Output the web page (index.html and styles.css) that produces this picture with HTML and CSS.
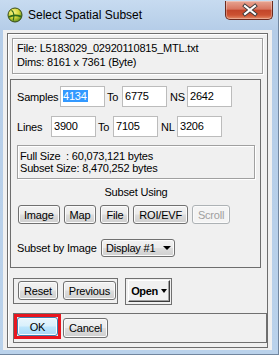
FILE: index.html
```html
<!DOCTYPE html>
<html lang="en">
<head>
  <meta charset="UTF-8">
  <title>Select Spatial Subset</title>
  <link rel="stylesheet" href="styles.css">
</head>
<body>

  <div class="window">
    <!-- title bar -->
    <div class="titlebar">
      <svg class="app-icon" viewBox="0 0 16 16">
        <defs>
          <radialGradient id="globe" cx="38%" cy="32%" r="70%">
            <stop offset="0" stop-color="#fbf48a"/>
            <stop offset="0.55" stop-color="#d2d53a"/>
            <stop offset="1" stop-color="#5f8f1e"/>
          </radialGradient>
        </defs>
        <circle cx="8" cy="8" r="7" fill="url(#globe)" stroke="#364a18" stroke-width="1"/>
        <path d="M1.8 10 C5 8.2 10 8 14.2 9.6" stroke="#2e6a1c" stroke-width="1.7" fill="none"/>
        <path d="M4.5 3.2 C7 5 7.4 9 6.2 13.6" stroke="#2e6a1c" stroke-width="1.1" fill="none"/>
      </svg>
      <span class="title">Select Spatial Subset</span>
      <div class="close-btn">
        <svg viewBox="0 0 48 19" width="48" height="19">
          <path d="M20 6 L30 14 M30 6 L20 14" stroke="#3b3b3b" stroke-width="4" stroke-linecap="square"/>
          <path d="M20 6 L30 14 M30 6 L20 14" stroke="#ffffff" stroke-width="2.1" stroke-linecap="square"/>
        </svg>
      </div>
    </div>

    <div class="client">
      <div class="outer">

        <div class="file-info">
          <div>File: L5183029_02920110815_MTL.txt</div>
          <div>Dims: 8161 x 7361 (Byte)</div>
        </div>

        <div class="subset-panel">
          <div class="field-row">
            <span class="lbl lbl-samples">Samples</span>
            <div class="field"><span class="sel">4134</span></div>
            <span class="lbl lbl-to">To</span>
            <div class="field">6775</div>
            <span class="lbl lbl-ns">NS</span>
            <div class="field">2642</div>
          </div>
          <div class="field-row row-lines">
            <span class="lbl lbl-lines">Lines</span>
            <div class="field">3900</div>
            <span class="lbl lbl-to">To</span>
            <div class="field">7105</div>
            <span class="lbl lbl-nl">NL</span>
            <div class="field">3206</div>
          </div>

          <div class="size-info">
            <div>Full Size&nbsp; : 60,073,121 bytes</div>
            <div>Subset Size: 8,470,252 bytes</div>
          </div>

          <div class="using-title">Subset Using</div>
          <div class="btn-row">
            <button class="btn">Image</button>
            <button class="btn">Map</button>
            <button class="btn">File</button>
            <button class="btn">ROI/EVF</button>
            <button class="btn" disabled>Scroll</button>
          </div>

          <div class="by-image">
            <span class="by-image-label">Subset by Image</span>
            <div class="dropdown">
              <span>Display #1</span>
              <span class="arrow"></span>
            </div>
          </div>
        </div>

        <div class="bottom-row">
          <div class="group group-reset">
            <button class="btn">Reset</button>
            <button class="btn">Previous</button>
          </div>
          <div class="group group-open">
            <div class="open-btn">Open <span class="arrow"></span></div>
          </div>
        </div>

        <div class="group group-ok">
          <div class="focus-mark"><button class="btn btn-ok">OK</button></div>
          <button class="btn btn-cancel">Cancel</button>
        </div>

      </div>
    </div>
  </div>

</body>
</html>
```

FILE: styles.css
```css
body {
  margin: 0;
  font-family: 'Liberation Sans', Arial, sans-serif;
  font-size: 11px;
  letter-spacing: -0.2px;
  color: #000;
  background: #b9d1ea;
}
.window {
  width: 279px;
  height: 355px;
  box-sizing: border-box;
  display: flex;
  flex-direction: column;
  background: linear-gradient(180deg, #c7dbf0 0, #b5cde8 30px, #bad2eb 100%);
  border-right: 1px solid #71869f;
  border-bottom: 1px solid #71869f;
}
.titlebar {
  height: 30px;
  flex-shrink: 0;
  display: flex;
  align-items: flex-start;
}
.app-icon {
  width: 16px;
  height: 16px;
  margin: 7px 0 0 7px;
}
.title {
  margin: 8px 0 0 5px;
  font-size: 12px;
  line-height: 15px;
  letter-spacing: 0;
}
.close-btn {
  margin: 1px 5px 0 auto;
  width: 48px;
  height: 19px;
  box-sizing: border-box;
  border: 1px solid #6b2a1e;
  border-top: none;
  border-radius: 0 0 5px 5px;
  background: linear-gradient(180deg, #e7a593 0%, #d87560 45%, #c3462a 52%, #cc5232 78%, #e48a66 100%);
  box-shadow: inset 0 0 0 1px rgba(255, 255, 255, 0.3);
  overflow: hidden;
}
.close-btn svg {
  display: block;
  margin: -1px 0 0 -1px;
}
.client {
  flex: 1;
  margin: 0 6px 4px 3px;
  padding: 3px 4px 2px 4px;
  background: #f0f0f0;
  display: flex;
  flex-direction: column;
}
.outer {
  flex: 1;
  border: 1px solid #6d6d6d;
  box-shadow: inset 1px 1px 0 #fff;
}
.file-info {
  margin: 4px 4px 0 4px;
  height: 36px;
  box-sizing: border-box;
  border: 1px solid #a0a0a0;
  box-shadow: inset 1px 1px 0 #fff, 1px 1px 0 #fff;
  padding: 2px 4px;
  line-height: 14px;
}
.subset-panel {
  margin: 5px 6px 0 2px;
  border: 1px solid #6d6d6d;
  padding: 0 5px 10px 6px;
}
.field-row {
  display: flex;
  align-items: center;
  margin-top: 6px;
  height: 21px;
}
.row-lines {
  margin-top: 9px;
}
.lbl {
  flex: none;
  padding-left: 2px;
  box-sizing: border-box;
}
.lbl-samples {
  width: 43px;
  padding-left: 0;
}
.lbl-lines {
  width: 34px;
  padding-left: 0;
}
.lbl-to {
  width: 17px;
}
.lbl-ns {
  width: 20px;
  padding-left: 3px;
}
.lbl-nl {
  width: 19px;
  padding-left: 3px;
}
.field {
  flex: none;
  width: 45px;
  height: 21px;
  box-sizing: border-box;
  border: 1px solid #bcbcbc;
  background: #fff;
  padding: 0 2px;
  line-height: 19px;
}
.sel {
  display: inline-block;
  background: #3399ff;
  color: #fff;
  line-height: 12px;
  padding: 0 1px 0 0;
}
.size-info {
  margin-top: 8px;
  border: 1px solid #a0a0a0;
  box-shadow: inset 1px 1px 0 #fff, 1px 1px 0 #fff;
  padding: 4px 2px;
  line-height: 12px;
}
.using-title {
  margin-top: 7px;
  line-height: 12px;
  text-align: center;
}
.btn-row {
  display: flex;
  gap: 4px;
  margin-top: 7px;
  padding-left: 1px;
}
.btn {
  font: inherit;
  letter-spacing: inherit;
  color: #000;
  height: 19px;
  box-sizing: border-box;
  padding: 0 5px;
  border: 1px solid #707070;
  border-radius: 3px;
  background: linear-gradient(180deg, #f2f2f2 0%, #ebebeb 48%, #dddddd 52%, #cfcfcf 100%);
  box-shadow: inset 0 0 0 1px #fbfbfb;
  line-height: 16px;
}
.btn:disabled {
  color: #a0a0a0;
  border-color: #adb2b5;
  background: #f4f4f4;
}
.by-image {
  display: flex;
  align-items: center;
  margin-top: 15px;
}
.by-image-label {
  width: 84px;
  flex: none;
}
.dropdown {
  width: 74px;
  height: 18px;
  box-sizing: border-box;
  border: 1px solid #707070;
  border-radius: 3px;
  background: linear-gradient(180deg, #f2f2f2 0%, #ebebeb 48%, #dddddd 52%, #cfcfcf 100%);
  box-shadow: inset 0 0 0 1px #fbfbfb;
  display: flex;
  align-items: center;
  justify-content: space-between;
  padding: 0 3px 0 4px;
}
.arrow {
  width: 0;
  height: 0;
  border-left: 4px solid transparent;
  border-right: 4px solid transparent;
  border-top: 4px solid #000;
}
.bottom-row {
  display: flex;
  align-items: flex-start;
  gap: 7px;
  margin: 10px 0 0 5px;
}
.group {
  border: 1px solid #707070;
  display: flex;
  align-items: flex-start;
}
.group-reset {
  gap: 5px;
  padding: 2px 1px 3px 4px;
}
.group-open {
  padding: 1px 1px 2px 2px;
}
.open-btn {
  width: 42px;
  height: 22px;
  box-sizing: border-box;
  border: 1px solid;
  border-color: #fff #3c3c3c #3c3c3c #fff;
  box-shadow: inset -1px -1px 0 #a0a0a0;
  display: flex;
  align-items: center;
  justify-content: center;
  gap: 3px;
  font-weight: bold;
  letter-spacing: -0.4px;
}
.open-btn .arrow {
  border-left-width: 3.5px;
  border-right-width: 3.5px;
}
.group-ok {
  align-self: flex-start;
  margin: 8px 0 0 5px;
  padding: 0 4px 3px 0;
  gap: 2px;
}
.focus-mark {
  border: 3px solid #e8161f;
}
.btn-ok {
  display: block;
  width: 41px;
  height: 19px;
  border-color: #3c7fb1;
  background: linear-gradient(180deg, #eaf6fd 0%, #d9f0fc 48%, #bee6fd 52%, #a7d9f5 100%);
}
.btn-cancel {
  height: 20px;
  margin-top: 4px;
}
```
